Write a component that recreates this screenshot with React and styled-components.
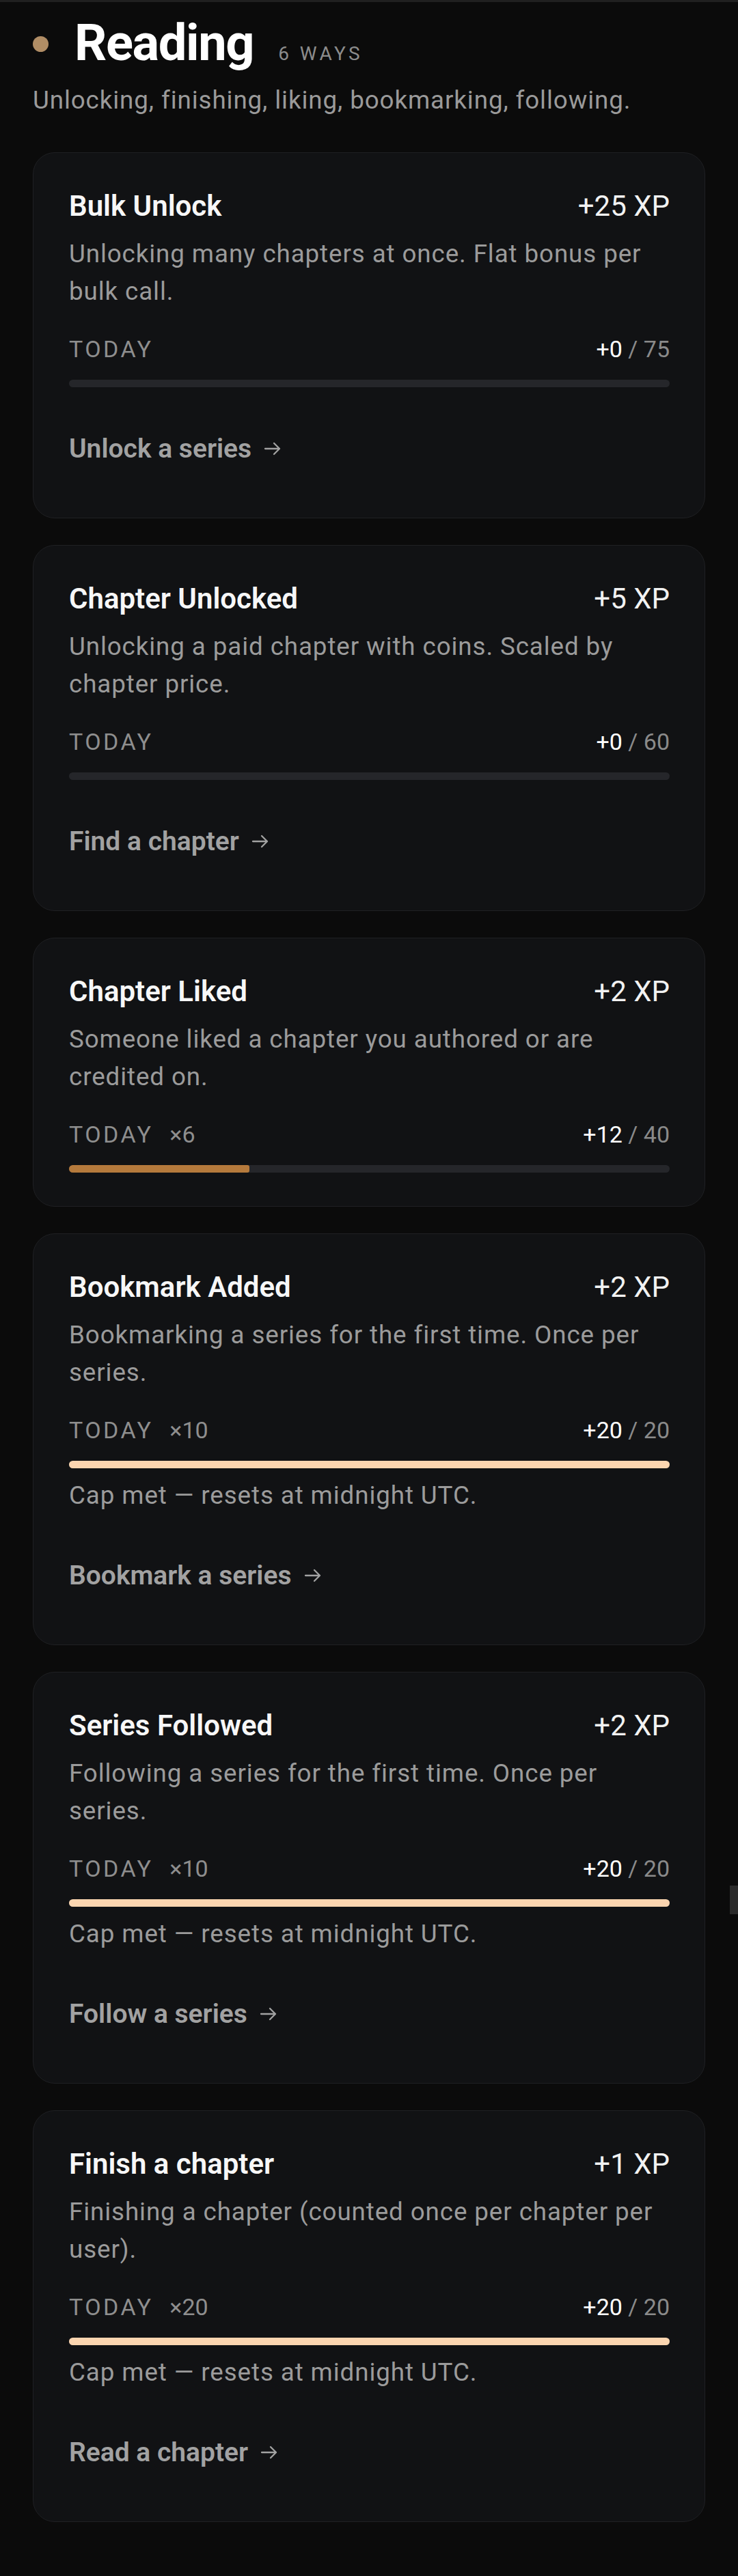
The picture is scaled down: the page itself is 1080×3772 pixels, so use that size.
import React from "react";
import styled, { createGlobalStyle } from "styled-components";

const GlobalStyle = createGlobalStyle`
  html, body {
    margin: 0;
    padding: 0;
    background: #0b0b0b;
  }
  body {
    font-family: Roboto, "Noto Sans", "Liberation Sans", sans-serif;
    -webkit-font-smoothing: antialiased;
  }
`;

const ways = [
  {
    title: "Bulk Unlock",
    xp: 25,
    desc: "Unlocking many chapters at once. Flat bonus per bulk call.",
    earned: 0,
    cap: 75,
    link: "Unlock a series",
  },
  {
    title: "Chapter Unlocked",
    xp: 5,
    desc: "Unlocking a paid chapter with coins. Scaled by chapter price.",
    earned: 0,
    cap: 60,
    link: "Find a chapter",
  },
  {
    title: "Chapter Liked",
    xp: 2,
    desc: "Someone liked a chapter you authored or are credited on.",
    count: 6,
    earned: 12,
    cap: 40,
  },
  {
    title: "Bookmark Added",
    xp: 2,
    desc: "Bookmarking a series for the first time. Once per series.",
    count: 10,
    earned: 20,
    cap: 20,
    link: "Bookmark a series",
  },
  {
    title: "Series Followed",
    xp: 2,
    desc: "Following a series for the first time. Once per series.",
    count: 10,
    earned: 20,
    cap: 20,
    link: "Follow a series",
  },
  {
    title: "Finish a chapter",
    xp: 1,
    desc: "Finishing a chapter (counted once per chapter per user).",
    count: 20,
    earned: 20,
    cap: 20,
    link: "Read a chapter",
  },
];

const Arrow = () => (
  <svg width="26" height="22" viewBox="0 0 26 22" fill="none">
    <path
      d="M2 11 H23 M15 3 L23 11 L15 19"
      stroke="currentColor"
      strokeWidth="2.3"
      strokeLinecap="round"
      strokeLinejoin="round"
    />
  </svg>
);

const WayCard = ({ way }) => {
  const pct = Math.min(100, (way.earned / way.cap) * 100);
  const full = way.earned >= way.cap;
  return (
    <Card>
      <CardHead>
        <CardTitle>{way.title}</CardTitle>
        <Xp>+{way.xp} XP</Xp>
      </CardHead>
      <Desc>{way.desc}</Desc>
      <ProgressRow>
        <span>
          <TodayLabel>Today</TodayLabel>
          {way.count && <Multiplier>×{way.count}</Multiplier>}
        </span>
        <Tally>
          <strong>+{way.earned}</strong> / {way.cap}
        </Tally>
      </ProgressRow>
      <Track>
        <Fill $full={full} style={{ width: `${pct}%` }} />
      </Track>
      {full && <CapNote>Cap met — resets at midnight UTC.</CapNote>}
      {way.link && (
        <ActionLink href="#">
          {way.link}
          <Arrow />
        </ActionLink>
      )}
    </Card>
  );
};

const App = () => {
  return (
    <Page>
      <GlobalStyle />
      <Header>
        <Dot />
        <TitleGroup>
          <Heading>Reading</Heading>
          <Count>6 ways</Count>
        </TitleGroup>
      </Header>
      <Subtitle>Unlocking, finishing, liking, bookmarking, following.</Subtitle>
      <CardList>
        {ways.map((way) => (
          <WayCard key={way.title} way={way} />
        ))}
      </CardList>
      <ScrollHint />
    </Page>
  );
};

const Page = styled.main`
  position: relative;
  box-sizing: border-box;
  min-height: 3772px;
  border-top: 3px solid #202020;
  padding: 16px 48px 80px;
`;

const Header = styled.header`
  display: flex;
  align-items: center;
  gap: 38px;
`;

const Dot = styled.span`
  width: 23px;
  height: 23px;
  border-radius: 50%;
  background: #b08d65;
  flex-shrink: 0;
  margin-top: 3px;
`;

const TitleGroup = styled.div`
  display: flex;
  align-items: baseline;
  gap: 36px;
`;

const Heading = styled.h1`
  margin: 0;
  font-size: 74px;
  line-height: 88px;
  font-weight: 700;
  letter-spacing: -1.4px;
  color: #ffffff;
`;

const Count = styled.span`
  font-size: 28px;
  letter-spacing: 0.16em;
  text-transform: uppercase;
  color: #8c8c8c;
`;

const Subtitle = styled.p`
  margin: 12px 0 49px;
  font-size: 36.75px;
  line-height: 55px;
  letter-spacing: 0.9px;
  color: #9a9a9a;
`;

const CardList = styled.div`
  display: flex;
  flex-direction: column;
  gap: 39px;
`;

const Card = styled.section`
  display: flex;
  flex-direction: column;
  background: #111214;
  border: 1px solid #1f2023;
  border-radius: 32px;
  padding: 48px 51px 49px 52px;
`;

const CardHead = styled.div`
  display: flex;
  justify-content: space-between;
  align-items: baseline;
  line-height: 60px;
`;

const CardTitle = styled.h3`
  margin: 0;
  font-size: 42px;
  font-weight: 600;
  color: #f7f7f7;
`;

const Xp = styled.span`
  font-size: 42px;
  font-weight: 400;
  color: #f2f2f2;
`;

const Desc = styled.p`
  margin: 12px 0 0;
  font-size: 36.75px;
  line-height: 55px;
  letter-spacing: 0.9px;
  color: #9b9b9b;
`;

const ProgressRow = styled.div`
  display: flex;
  justify-content: space-between;
  align-items: baseline;
  margin-top: 32px;
  font-size: 34px;
  line-height: 51px;
  color: #8e8e8e;
`;

const TodayLabel = styled.span`
  text-transform: uppercase;
  letter-spacing: 0.1em;
`;

const Multiplier = styled.span`
  margin-left: 24px;
`;

const Tally = styled.span`
  color: #8a8a8a;

  strong {
    font-weight: 400;
    color: #ffffff;
  }
`;

const Track = styled.div`
  margin-top: 19px;
  height: 11px;
  border-radius: 6px;
  background: #25262a;
  overflow: hidden;
`;

const Fill = styled.div`
  height: 100%;
  border-radius: 3px;
  background: ${(p) => (p.$full ? "#fbd5b0" : "#b57a3c")};
`;

const CapNote = styled.p`
  margin: 12px 0 0;
  font-size: 36.75px;
  line-height: 55px;
  letter-spacing: 0.9px;
  color: #9b9b9b;
`;

const ActionLink = styled.a`
  align-self: flex-start;
  display: inline-flex;
  align-items: center;
  gap: 18px;
  margin-top: 38px;
  padding: 21px 0;
  font-size: 39px;
  line-height: 62px;
  font-weight: 600;
  color: #a2a2a2;
  text-decoration: none;
`;

const ScrollHint = styled.div`
  position: absolute;
  right: 0;
  top: 2758px;
  width: 12px;
  height: 42px;
  background: #2a2a2a;
`;

export default App;
